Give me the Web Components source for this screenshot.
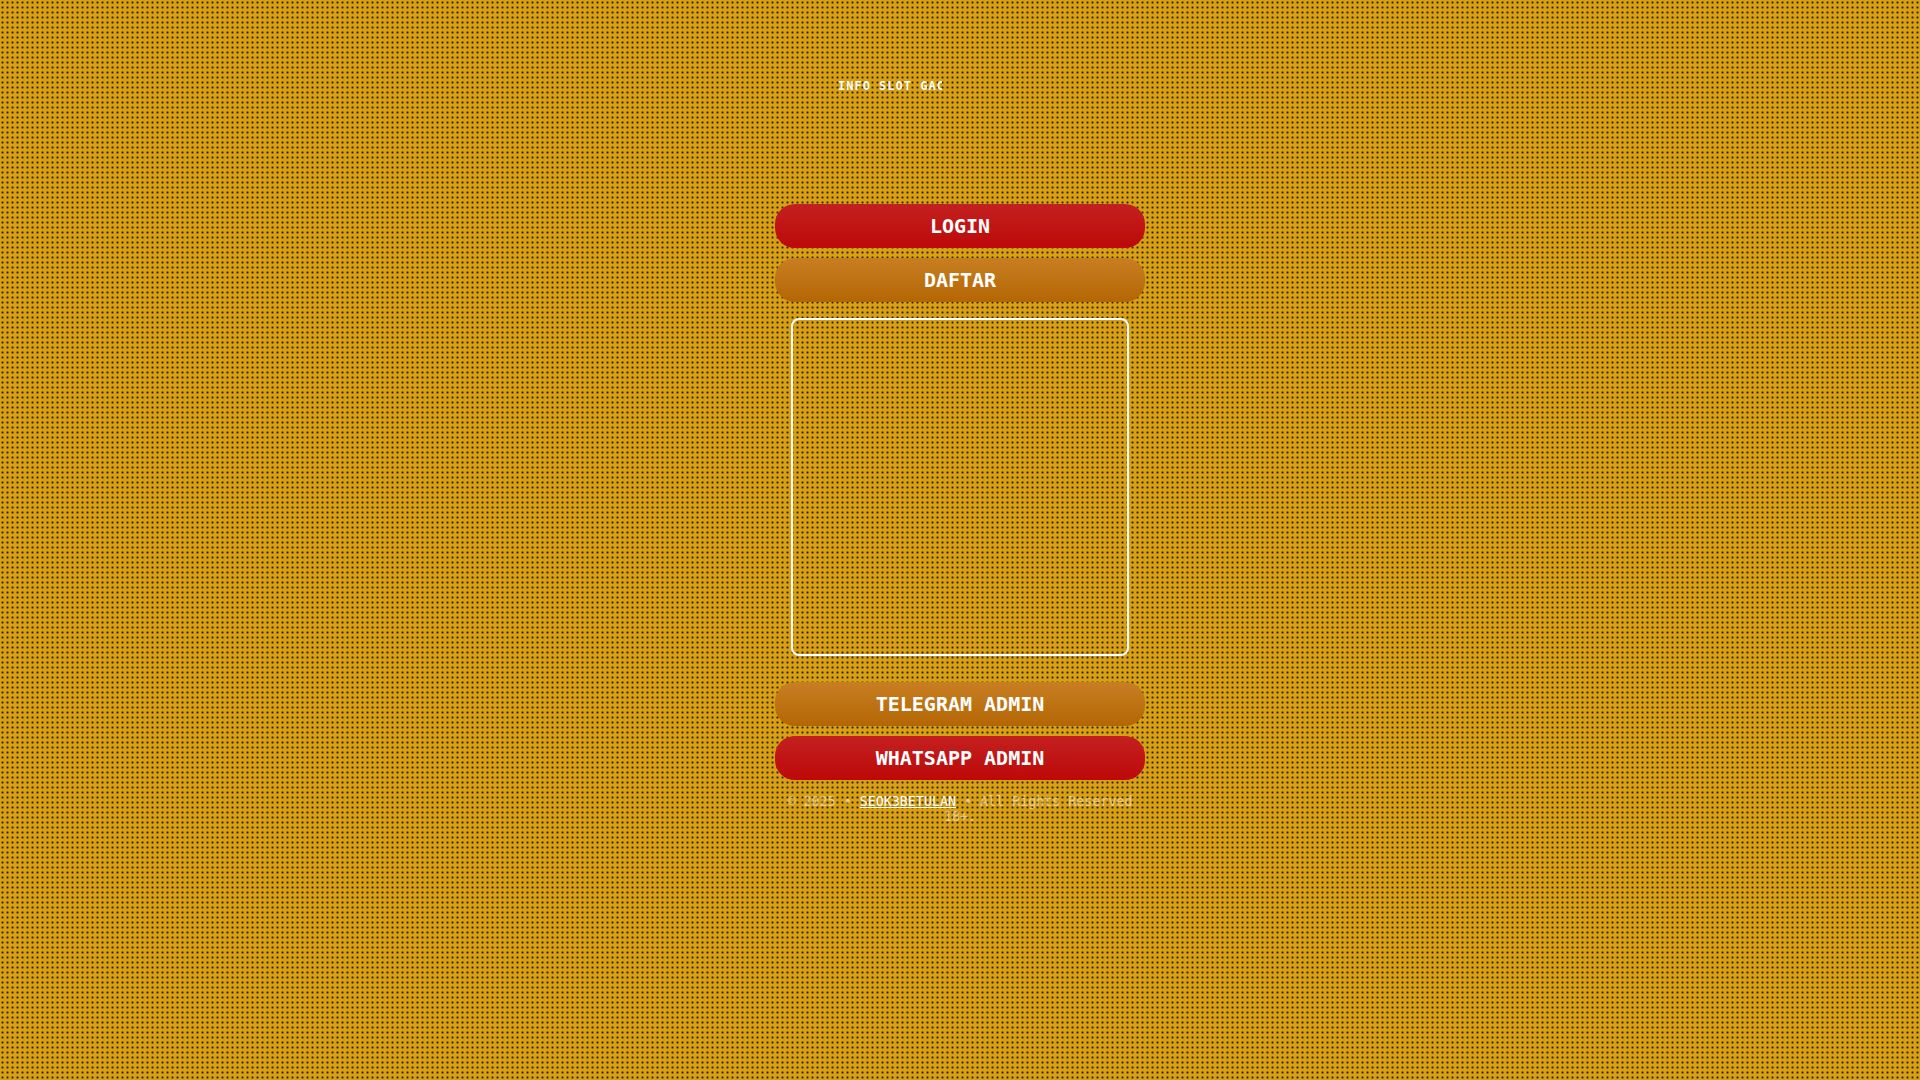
<!DOCTYPE html>
<html lang="id">
<head>
<meta charset="utf-8">
<meta name="viewport" content="width=device-width, initial-scale=1">
<title>SEOK3BETULAN</title>
<style>
body {
  margin: 0;
  min-height: 100vh;
  font-family: "DejaVu Sans Mono", monospace;
  color: #fff;
  background: #daa012 radial-gradient(#1f1f1f 5%, transparent 48%) 0 0 / 5px 5px;
}
</style>
</head>
<body>
<landing-page></landing-page>
<script>
class BaseElement extends HTMLElement {
  connectedCallback() {
    if (!this.shadowRoot) {
      this.attachShadow({ mode: "open" }).innerHTML = this.render();
    }
  }
}

class NewsTicker extends BaseElement {
  render() {
    return `<style>
      :host { display: block; width: 244px; font-size: 12px; line-height: 16px; font-weight: bold; letter-spacing: 1px; }
      div { width: 104px; overflow: hidden; white-space: nowrap; }
    </style><div><slot></slot></div>`;
  }
}

class PillButton extends BaseElement {
  render() {
    return `<style>
      :host { display: block; --top: #c87f22; --bottom: #b46604; }
      :host([tone="red"]) { --top: #c42020; --bottom: #bd0909; }
      button {
        display: block; width: 100%; height: 44px; padding: 0; border: 0; border-radius: 20px;
        font: bold 20px/24px "DejaVu Sans Mono", monospace; color: #fff; cursor: pointer;
        background: linear-gradient(var(--top), var(--bottom));
      }
    </style><button type="button"><slot></slot></button>`;
  }
}

class BannerFrame extends BaseElement {
  render() {
    return `<style>
      :host { display: block; box-sizing: border-box; margin: 6px 16px 16px; aspect-ratio: 1; border: 2px solid #fff; border-radius: 8px; }
    </style><slot></slot>`;
  }
}

class PageFooter extends BaseElement {
  render() {
    return `<style>
      :host { display: block; text-align: center; font-size: smaller; line-height: 15px; color: rgba(255, 255, 255, .5); }
      a { color: #fff; }
    </style>© 2025 • <a href="#">SEOK3BETULAN</a> • All Rights Reserved 18+.`;
  }
}

class LandingPage extends BaseElement {
  render() {
    return `<style>
      :host { display: block; padding: 78px 16px; }
      main { display: flex; flex-direction: column; gap: 10px; max-width: 370px; margin: 0 auto; }
      header { display: flex; justify-content: center; height: 116px; }
      page-footer { margin-top: 4px; }
    </style>
    <main>
      <header><news-ticker>INFO SLOT GACOR</news-ticker></header>
      <pill-button tone="red">LOGIN</pill-button>
      <pill-button>DAFTAR</pill-button>
      <banner-frame></banner-frame>
      <pill-button>TELEGRAM ADMIN</pill-button>
      <pill-button tone="red">WHATSAPP ADMIN</pill-button>
      <page-footer></page-footer>
    </main>`;
  }
}

customElements.define("news-ticker", NewsTicker);
customElements.define("pill-button", PillButton);
customElements.define("banner-frame", BannerFrame);
customElements.define("page-footer", PageFooter);
customElements.define("landing-page", LandingPage);
</script>
</body>
</html>
